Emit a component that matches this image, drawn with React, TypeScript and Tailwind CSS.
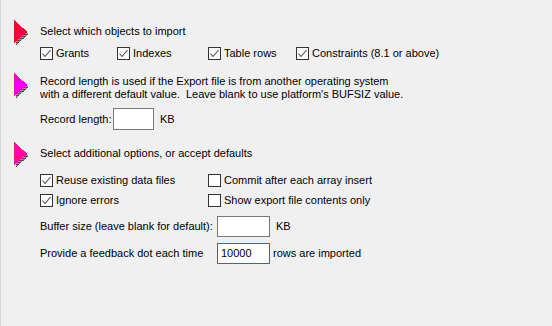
import React from "react";

const Arrow = ({ red }: { red?: boolean }) => {
  const id = red ? "patRed" : "patMag";
  return (
    <svg width="16" height="26" viewBox="0 0 16 26" shapeRendering="crispEdges">
      <defs>
        <pattern id={id} width="2" height="2" patternUnits="userSpaceOnUse">
          <rect width="2" height="2" fill={red ? "#ff0000" : "#ff00ff"} />
          <rect width="1" height="1" fill={red ? "#ff0050" : "#ff0090"} />
          <rect x="1" y="1" width="1" height="1" fill={red ? "#ff0050" : "#ff0090"} />
        </pattern>
        <pattern id={id + "sh"} width="2" height="2" patternUnits="userSpaceOnUse">
          <rect width="1" height="1" fill="#404040" />
          <rect x="1" y="1" width="1" height="1" fill="#808080" />
          <rect x="1" y="0" width="1" height="1" fill="#606060" />
          <rect x="0" y="1" width="1" height="1" fill="#a0a0a0" />
        </pattern>
      </defs>
      <polygon points="2,3 15,14 2,25" fill={`url(#${id}sh)`} />
      <polygon points="0,0 13,11.5 0,23" fill={`url(#${id})`} />
    </svg>
  );
};

const Check = ({ checked }: { checked?: boolean }) => (
  <span className="w-[13px] h-[13px] border border-[#333333] bg-white flex items-center justify-center shrink-0">
    {checked && (
      <svg width="11" height="11" viewBox="0 0 11 11">
        <polyline points="1.5,5.5 4,8.5 9.5,2" fill="none" stroke="#4a4a4a" strokeWidth="1.1" />
      </svg>
    )}
  </span>
);

const CB = ({ label, checked, w }: { label: string; checked?: boolean; w?: string }) => (
  <div className={`flex items-center gap-[3px] h-[13px] ${w ?? ""}`}>
    <Check checked={checked} />
    <span className="leading-[13px] whitespace-nowrap">{label}</span>
  </div>
);

export default function App() {
  return (
    <div
      className="w-[552px] h-[326px] bg-[#f0f0f0] border-l border-[#d9d9d9] text-black text-[11px] overflow-hidden"
      style={{ fontFamily: '"Liberation Sans", Arial, sans-serif' }}
    >
      <div className="flex flex-col pl-[13px] pt-[20px]">
        {/* Section 1 */}
        <div className="flex">
          <div className="w-[26px] shrink-0">
            <Arrow red />
          </div>
          <div className="flex flex-col pt-[4px]">
            <div className="leading-[15px] whitespace-nowrap">Select which objects to import</div>
            <div className="flex mt-[8px]">
              <CB label="Grants" checked w="w-[77px]" />
              <CB label="Indexes" checked w="w-[91px]" />
              <CB label="Table rows" checked w="w-[88px]" />
              <CB label="Constraints (8.1 or above)" checked />
            </div>
          </div>
        </div>

        {/* Section 2 */}
        <div className="flex mt-[13px]">
          <div className="w-[26px] shrink-0">
            <Arrow />
          </div>
          <div className="flex flex-col pt-[2px]">
            <div className="leading-[13px] whitespace-nowrap">
              Record length is used if the Export file is from another operating system
              <br />
              with a different default value.&nbsp; Leave blank to use platform's BUFSIZ value.
            </div>
            <div className="flex items-center mt-[7px] h-[22px]">
              <span className="w-[73px] whitespace-nowrap">Record length:</span>
              <div className="w-[41px] h-[22px] bg-white border border-[#7a7a7a]" />
              <span className="ml-[6px]">KB</span>
            </div>
          </div>
        </div>

        {/* Section 3 */}
        <div className="flex mt-[12px]">
          <div className="w-[26px] shrink-0">
            <Arrow />
          </div>
          <div className="flex flex-col pt-[4px]">
            <div className="leading-[15px] whitespace-nowrap">Select additional options, or accept defaults</div>
            <div className="flex mt-[13px]">
              <CB label="Reuse existing data files" checked w="w-[168px]" />
              <CB label="Commit after each array insert" />
            </div>
            <div className="flex mt-[7px]">
              <CB label="Ignore errors" checked w="w-[168px]" />
              <CB label="Show export file contents only" />
            </div>
            <div className="flex items-center mt-[9px] h-[21px]">
              <span className="w-[177px] whitespace-nowrap">Buffer size (leave blank for default):</span>
              <div className="w-[53px] h-[21px] bg-white border border-[#7a7a7a]" />
              <span className="ml-[6px]">KB</span>
            </div>
            <div className="flex items-center mt-[6px] h-[21px]">
              <span className="w-[177px] whitespace-nowrap">Provide a feedback dot each time</span>
              <div className="w-[53px] h-[21px] bg-white border border-[#0078d7] flex items-center pl-[3px]">
                10000
              </div>
              <span className="ml-[3px]">rows are imported</span>
            </div>
          </div>
        </div>
      </div>
    </div>
  );
}
